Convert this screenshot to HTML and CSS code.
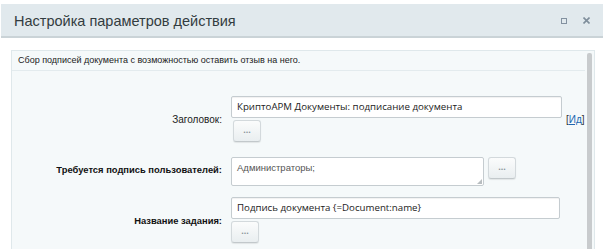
FILE: index.html
```html
<!DOCTYPE html>
<html lang="ru">
<head>
<meta charset="utf-8">
<link rel="stylesheet" href="styles.css">
</head>
<body>
<div class="window">
  <div class="titlebar">
    <span class="title">Настройка параметров действия</span>
    <span class="tools">
      <span class="maximize"></span>
      <svg class="close" width="7" height="7" viewBox="0 0 7 7"><path d="M0.5 0.5L6.5 6.5M6.5 0.5L0.5 6.5" stroke="#7f8e9b" stroke-width="1.6"/></svg>
    </span>
  </div>
  <div class="content">
    <div class="panel">
      <div class="panel-main">
        <div class="desc">Сбор подписей документа с возможностью оставить отзыв на него.</div>
        <div class="form">
          <div class="label">Заголовок:</div>
          <div class="field">
            <div class="line">
              <div class="input wide">КриптоАРМ Документы: подписание документа</div>
              <span class="idlink">[<a href="#">Ид</a>]</span>
            </div>
            <button class="btn btn-first">...</button>
          </div>

          <div class="label bold">Требуется подпись пользователей:</div>
          <div class="field row2">
            <div class="line top">
              <div class="textarea">Администраторы;<span class="grip"></span></div>
              <button class="btn side">...</button>
            </div>
          </div>

          <div class="label bold">Название задания:</div>
          <div class="field">
            <div class="input wide2">Подпись документа {=Document:name}</div>
            <button class="btn">...</button>
          </div>
        </div>
      </div>
      <div class="scroll"><div class="thumb"></div></div>
    </div>
  </div>
</div>
</body>
</html>
```

FILE: styles.css
```css
html, body {
  margin: 0;
  padding: 0;
  background: #ffffff;
  overflow: hidden;
}
body {
  width: 606px;
  height: 249px;
  font-family: "Liberation Sans", Arial, sans-serif;
}
.window {
  padding-top: 4px;
}
.titlebar {
  margin-left: 1px;
  width: 602px;
  height: 32px;
  background: #e1e9ed;
  border-bottom: 2px solid #cad3d7;
  display: flex;
  align-items: center;
  justify-content: space-between;
  box-sizing: content-box;
}
.title {
  padding-left: 13px;
  font-size: 14.5px;
  color: #333c40;
  margin-top: 1px;
}
.tools {
  display: flex;
  align-items: center;
  gap: 16px;
  padding-right: 13px;
  margin-top: 1px;
}
.maximize {
  width: 4px;
  height: 4px;
  border: 1.5px solid #8391a0;
  display: block;
}
.close {
  display: block;
}
.content {
  padding: 12px 11px 0 11px;
}
.panel {
  display: flex;
  border: 1px solid #dfe8eb;
  border-bottom: none;
  background: #f5f9fa;
  height: 210px;
  width: 582px;
}
.panel-main {
  flex: 1;
}
.desc {
  height: 19px;
  line-height: 19px;
  font-size: 9px;
  color: #222;
  padding-left: 6px;
  border-bottom: 1px solid #e3ebee;
}
.form {
  display: grid;
  grid-template-columns: 210px 1fr;
  column-gap: 9px;
  padding-top: 25px;
  align-items: center;
}
.label {
  text-align: right;
  font-size: 10px;
  color: #222;
}
.label.bold {
  font-weight: bold;
  font-size: 9.4px;
  color: #111;
}
.field {
  display: flex;
  flex-direction: column;
  align-items: flex-start;
}
.row2 {
  margin-top: 15px;
  margin-bottom: 11px;
}
.line {
  display: flex;
  align-items: flex-end;
}
.line.top {
  align-items: flex-start;
}
.input {
  height: 20px;
  box-sizing: content-box;
  border: 1px solid #c5ccd0;
  border-radius: 2px;
  background: #fff;
  font-family: "Open Sans", sans-serif;
  font-size: 9.7px;
  line-height: 20px;
  color: #222;
  padding-left: 5px;
  box-shadow: inset 0 1px 1px rgba(0,0,0,0.06);
}
.wide {
  width: 324px;
}
.wide2 {
  width: 322px;
}
.idlink {
  font-size: 10px;
  color: #333;
  margin-left: 4px;
  margin-bottom: -7px;
}
.idlink a {
  color: #2067b0;
}
.textarea {
  position: relative;
  width: 246px;
  height: 23px;
  border: 1px solid #c5ccd0;
  border-radius: 2px;
  background: #fff;
  font-size: 9.5px;
  color: #555;
  padding: 4px 0 0 5px;
  box-sizing: content-box;
}
.grip {
  position: absolute;
  right: 1px;
  bottom: 1px;
  width: 0;
  height: 0;
  border-left: 5px solid transparent;
  border-bottom: 5px solid #b8bdc0;
}
.btn {
  width: 28px;
  height: 22px;
  margin-top: 2px;
  border: 1px solid #d3d9dc;
  border-bottom-color: #c2c8cb;
  border-radius: 3px;
  background: linear-gradient(#fbfcfc, #e9eef0);
  color: #8a949a;
  font-size: 9px;
  font-weight: bold;
  padding: 0 0 3px 0;
  font-family: "Liberation Sans", sans-serif;
  box-shadow: 0 1px 1px rgba(0,0,0,0.08);
}
.btn-first {
  margin-left: 2px;
}
.btn.side {
  margin-top: 0;
  margin-left: 4px;
}
.scroll {
  width: 12px;
  display: flex;
  justify-content: center;
  padding-top: 2px;
}
.thumb {
  width: 5px;
  height: 220px;
  background: #c8cbcd;
  border-radius: 2px 2px 0 0;
}
```
